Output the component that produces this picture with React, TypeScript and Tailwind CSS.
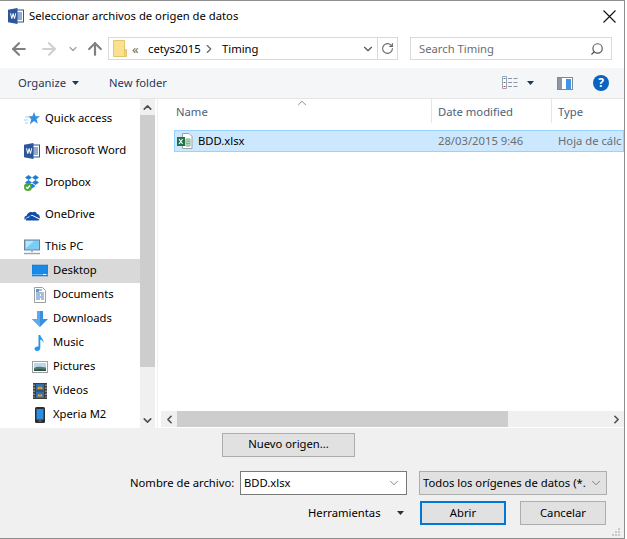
import { ChevronDown, ChevronUp, ChevronLeft, ChevronRight, ArrowLeft, ArrowRight, ArrowUp, RotateCw, Search } from "lucide-react";
import type { ReactNode } from "react";

const WordIcon = ({ size = 16 }: { size?: number }) => (
  <svg width={size} height={size} viewBox="0 0 16 16" className="shrink-0">
    <rect x="6" y="2" width="9.5" height="12" fill="#fff" stroke="#2b579a" />
    <path d="M9 5h5M9 7h5M9 9h5M9 11h5" stroke="#2b579a" />
    <path d="M0 1.8 9.5 0v16L0 14.2z" fill="#2b579a" />
    <path d="M2 5.2h1.1l.7 3.6.9-3.6h.9l.9 3.6.7-3.6h1l-1.2 5.6h-1L5.1 7.4l-.8 3.4h-1z" fill="#fff" />
  </svg>
);

const Folder = () => (
  <svg width="14" height="17" viewBox="0 0 14 17" className="shrink-0">
    <path d="M.5.5h11v16H.5z" fill="#fbe08f" stroke="#e2c66d" />
    <path d="M11.5 9.500h2v7h-2z" fill="#f4d57d" stroke="#e2c66d" />
  </svg>
);

const Star = () => (
  <svg width="16" height="16" viewBox="0 0 16 16" className="shrink-0">
    <path d="M10 1l1.600 4.200H16l-3.500 2.900 1.300 4.600L10 10l-4.200 3.600 1.500-5L4.500 5.200H8.400z" fill="#2f8fe6" />
    <path d="M1 6h4M0 9h4M1 12h3" stroke="#9fcdf2" />
  </svg>
);

const Dropbox = () => (
  <svg width="16" height="16" viewBox="0 0 16 16" className="shrink-0">
    <path d="M4.500 0 8 2.500 4.500 5 1 2.500zM11.500 0 15 2.500 11.500 5 8 2.500zM4.500 5 8 7.500 4.500 10 1 7.500zM11.500 5 15 7.500 11.500 10 8 7.500zM8 8.500l3.500 2.500L8 13.500 4.500 11z" fill="#1f7fd6" />
    <circle cx="4" cy="12" r="4" fill="#4ba63a" />
    <path d="M2 12l1.500 1.500L6 10.500" stroke="#fff" strokeWidth="1.300" fill="none" />
  </svg>
);

const OneDrive = () => (
  <svg width="16" height="16" viewBox="0 0 16 16" className="shrink-0">
    <path d="M1 13c-1.200-1.500-.6-4 1.600-4.200C3.200 6 6 4 8.400 5.300c1.300-1 4-.8 4.600 1.700 2 .2 3.400 2.400 2.700 4.400L9.500 8.400c-1.800-1-3-.2-3.500 1.200C4 9.200 1.800 10.600 1 13z" fill="#0f4fa8" />
    <path d="M2 13.500c-.5-2 1-3.200 3-3 .8-1.800 3-2.400 4.500-1l6 3c-.3.600-.8 1-1.500 1z" fill="#0f4fa8" />
  </svg>
);

const Monitor = ({ small }: { small?: boolean }) =>
  small ? (
    <svg width="16" height="16" viewBox="0 0 16 16" className="shrink-0">
      <rect x="0" y="2" width="16" height="11" fill="#1a8ae6" stroke="#0f6cc0" strokeWidth=".5" />
      <path d="M0 11.500h16" stroke="#55b3f5" />
      <path d="M11 11.500h3" stroke="#fff" />
    </svg>
  ) : (
    <svg width="16" height="16" viewBox="0 0 16 16" className="shrink-0">
      <rect x=".5" y="1" width="15" height="10" fill="#7bcdf7" stroke="#6d8296" />
      <path d="M2 2h8L2 9z" fill="#b5e6fb" />
      <path d="M7 11.500h2v1.500H7z" fill="#a0aab4" />
      <path d="M0 14.500h16" stroke="#9aa5b1" strokeWidth="1.500" />
    </svg>
  );

const Documents = () => (
  <svg width="16" height="16" viewBox="0 0 16 16" className="shrink-0">
    <path d="M2.500.5h8l3 3v12h-11z" fill="#fff" stroke="#9aa0a6" />
    <path d="M7 3h3M4 6h8M4 8h4M9 8h3M4 10h8M4 12h4M9 12h3" stroke="#4a7fb0" />
    <rect x="4" y="2" width="3" height="3" fill="#4d9be0" />
  </svg>
);

const Downloads = () => (
  <svg width="16" height="16" viewBox="0 0 16 16" className="shrink-0">
    <path d="M5 0h6v8h5l-8 8-8-8h5z" fill="#3a8fe0" />
    <path d="M5 0h3v16L0 8h5z" fill="#5ea9ea" />
  </svg>
);

const Music = () => (
  <svg width="16" height="16" viewBox="0 0 16 16" className="shrink-0">
    <path d="M6.500 0h1.800c.3 3 3.700 4 3.200 8-.5-1.800-1.700-3-3.200-3.400V13c0 1.800-1.500 3-3.300 3C3.500 16 2.500 15 2.500 13.800c0-1.500 1.700-2.700 4-2.300z" fill="#1f97ee" />
  </svg>
);

const Pictures = () => (
  <svg width="16" height="16" viewBox="0 0 16 16" className="shrink-0">
    <rect x=".5" y="2.500" width="15" height="11" fill="#fff" stroke="#9aa0a6" />
    <rect x="2" y="4" width="12" height="8" fill="#bcd7ea" />
    <path d="M2 9c3-2 6-1.500 12-.5V12H2z" fill="#4f7a66" />
    <path d="M2 11c4-1 8-1 12 0v1H2z" fill="#2e4e45" />
  </svg>
);

const Videos = () => (
  <svg width="16" height="16" viewBox="0 0 16 16" className="shrink-0">
    <rect x="1" y="0" width="14" height="16" fill="#3d3d3d" />
    <path d="M2 1.500v13M14 1.500v13" stroke="#ddd" strokeDasharray="1.500 1.500" />
    <rect x="4" y="1" width="8" height="6.500" fill="#2f6fb5" />
    <rect x="4" y="8.500" width="8" height="6.500" fill="#2f6fb5" />
    <path d="M5 6l2-3 1 2 1-2 2 3zM5 13.500l2-3 1 2 1-2 2 3z" fill="#e0a020" />
  </svg>
);

const Phone = () => (
  <svg width="16" height="16" viewBox="0 0 16 16" className="shrink-0">
    <rect x="3" y="0" width="10" height="16" rx="1.500" fill="#2c2c2c" />
    <rect x="4.500" y="2" width="7" height="10.500" fill="#2a8fe0" />
    <rect x="6.500" y="13.500" width="3" height="1" fill="#888" />
  </svg>
);

const ExcelIcon = () => (
  <svg width="16" height="16" viewBox="0 0 16 16" className="shrink-0">
    <path d="M5.500.5h6.500l3 3v12H5.500z" fill="#fff" stroke="#9aa0a6" />
    <path d="M9 6h4v7H9zM9 8.300h4M9 10.600h4M11 6v7" fill="none" stroke="#76b08c" />
    <rect x="0" y="4" width="8" height="9" fill="#1f7244" />
    <path d="M2 6l3.600 5M5.600 6L2 11" stroke="#fff" strokeWidth="1.200" />
  </svg>
);

const DetailsIcon = () => (
  <svg width="16" height="14" viewBox="0 0 16 14" className="shrink-0">
    <path d="M.5.500h4v12h-4z" fill="#fff" stroke="#9aa5b1" />
    <path d="M1.500 2.500h2" stroke="#4a7fb0" />
    <path d="M1.500 6.500h2" stroke="#6d7885" />
    <path d="M1.500 10.500h2" stroke="#d04040" />
    <path d="M6 2.500h4M11.500 2.500h4M6 6.500h4M11.500 6.500h4M6 10.500h4M11.500 10.500h4" stroke="#8a96a3" />
  </svg>
);

const PaneIcon = () => (
  <svg width="16" height="13" viewBox="0 0 16 13" className="shrink-0">
    <rect x=".5" y=".5" width="15" height="12" fill="#fff" stroke="#7d8a96" />
    <rect x="1" y="1" width="4" height="11" fill="#8c98a4" />
    <rect x="9" y="2" width="5" height="10" fill="#3e96e4" />
  </svg>
);

const CloseIcon = () => (
  <svg width="13" height="13" viewBox="0 0 13 13" className="shrink-0">
    <path d="M.5.5l12 12M12.500.5l-12 12" stroke="#111" strokeWidth="1.100" />
  </svg>
);

const Caret = ({ color = "#1e395b" }: { color?: string }) => (
  <svg width="7" height="4" viewBox="0 0 7 4" className="shrink-0">
    <path d="M0 0h7L3.500 4z" fill={color} />
  </svg>
);

const NavRow = ({ icon, label, indent, selected, gap }: { icon: ReactNode; label: string; indent?: boolean; selected?: boolean; gap?: boolean }) => (
  <div className={`h-6 flex items-center gap-[5px] text-black ${indent ? "pl-8" : "pl-6"} ${selected ? "bg-[#d9d9d9]" : ""} ${gap ? "mt-2" : ""}`}>
    {icon}
    <span className="pb-[2px]">{label}</span>
  </div>
);

const App = () => {
  return (
    <div className="w-[625px] h-[539px] bg-white border-t border-r border-b border-[#8f8f8f] flex flex-col overflow-hidden text-[11.25px] leading-4 text-black font-['Noto_Sans','Open_Sans',sans-serif]">
      {/* title bar */}
      <div className="h-8 shrink-0 flex items-center pl-2 pr-[8px] pb-[2px]">
        <WordIcon />
        <span className="ml-[5px] flex-1 truncate">Seleccionar archivos de origen de datos</span>
        <CloseIcon />
      </div>

      {/* address row */}
      <div className="h-[35px] shrink-0 flex items-center pl-[9px] pb-[4px]">
        <ArrowLeft size={20} strokeWidth={2.6} className="text-[#808080]" />
        <ArrowRight size={20} strokeWidth={2.6} className="ml-[10px] text-[#d0d0d0]" />
        <ChevronDown size={12} strokeWidth={2.5} className="ml-[8px] text-[#a0a0a0]" />
        <ArrowUp size={20} strokeWidth={2.6} className="ml-[6px] text-[#808080]" />
        <div className="ml-[3px] w-[290px] h-[23px] border border-[#d9d9d9] flex items-center pl-1">
          <Folder />
          <span className="ml-[5px] w-4 text-[13px] text-[#666]">«</span>
          <span className="w-[54px]">cetys2015</span>
          <ChevronRight size={14} strokeWidth={2} className="text-[#666]" />
          <span className="ml-[6px]">Timing</span>
          <ChevronDown size={14} strokeWidth={2} className="ml-auto mr-[2px] text-[#555]" />
          <div className="w-5 h-full border-l border-[#d9d9d9] flex items-center justify-center">
            <RotateCw size={13} strokeWidth={2} className="text-[#666]" />
          </div>
        </div>
        <div className="ml-3 w-[202px] h-[23px] border border-[#d9d9d9] flex items-center pl-2 pr-[7px] text-[#6d6d6d]">
          <span className="flex-1">Search Timing</span>
          <Search size={14} strokeWidth={2} className="text-[#555] -scale-x-100" />
        </div>
      </div>

      {/* toolbar */}
      <div className="h-[31px] shrink-0 bg-[#f5f6f7] border-b border-[#e5e5e5] flex items-center pl-[18px] pr-[15px] text-[#1e395b]">
        <span className="w-[54px]">Organize</span>
        <Caret />
        <span className="ml-[30px]">New folder</span>
        <span className="ml-auto"><DetailsIcon /></span>
        <span className="ml-[9px]"><Caret /></span>
        <span className="ml-[23px]"><PaneIcon /></span>
        <div className="ml-[20px] w-4 h-4 rounded-full bg-[#0b63c0] text-white text-[12px] font-bold flex items-center justify-center">?</div>
      </div>

      {/* main */}
      <div className="flex-1 min-h-0 flex">
        <div className="w-[140px] shrink-0 pt-2">
          <NavRow icon={<Star />} label="Quick access" />
          <NavRow icon={<WordIcon />} label="Microsoft Word" gap />
          <NavRow icon={<Dropbox />} label="Dropbox" gap />
          <NavRow icon={<OneDrive />} label="OneDrive" gap />
          <NavRow icon={<Monitor />} label="This PC" gap />
          <NavRow icon={<Monitor small />} label="Desktop" indent selected />
          <NavRow icon={<Documents />} label="Documents" indent />
          <NavRow icon={<Downloads />} label="Downloads" indent />
          <NavRow icon={<Music />} label="Music" indent />
          <NavRow icon={<Pictures />} label="Pictures" indent />
          <NavRow icon={<Videos />} label="Videos" indent />
          <NavRow icon={<Phone />} label="Xperia M2" indent />
        </div>
        <div className="w-[15px] shrink-0 bg-[#f0f0f0] flex flex-col">
          <div className="h-4 flex items-center justify-center"><ChevronUp size={13} strokeWidth={3} className="text-[#505050]" /></div>
          <div className="h-[252px] bg-[#cdcdcd]" />
          <div className="mt-auto h-4 flex items-center justify-center"><ChevronDown size={13} strokeWidth={3} className="text-[#505050]" /></div>
        </div>
        <div className="flex-1 min-w-0 ml-[2px] border-l border-[#f0f0f0] flex flex-col">
          <div className="flex-1 min-h-0 relative pl-4">
            <div className="h-6 flex text-[#4c607a]">
              <div className="w-[258px] pl-[2px] pt-[5px] border-r border-[#e5e5e5]">Name</div>
              <div className="w-[120px] pl-[6px] pt-[5px] border-r border-[#e5e5e5]">Date modified</div>
              <div className="pl-[6px] pt-[5px]">Type</div>
            </div>
            <ChevronUp size={14} strokeWidth={1.5} className="absolute left-[137px] -top-[3px] text-[#7a7a7a]" />
            <div className="mt-[7px] h-[22px] bg-[#cce8ff] border border-[#99d1ff] flex items-center whitespace-nowrap overflow-hidden">
              <div className="w-[263px] shrink-0 flex items-center gap-[5px] pl-[2px]">
                <ExcelIcon />
                <span>BDD.xlsx</span>
              </div>
              <span className="w-[120px] shrink-0 text-[#6d6d6d]">28/03/2015 9:46</span>
              <span className="text-[#6d6d6d]">Hoja de cálc</span>
            </div>
          </div>
          <div className="h-[16px] shrink-0 ml-[3px] mb-px bg-[#f0f0f0] flex items-center">
            <div className="w-4 flex justify-center"><ChevronLeft size={13} strokeWidth={3} className="text-[#505050]" /></div>
            <div className="w-[331px] h-full bg-[#cdcdcd]" />
            <div className="ml-auto w-4 flex justify-center"><ChevronRight size={13} strokeWidth={3} className="text-[#505050]" /></div>
          </div>
        </div>
      </div>

      {/* footer */}
      <div className="h-[110px] shrink-0 bg-[#f0f0f0] flex flex-col relative">
        <div className="pl-[222px] pt-[5px]">
          <button className="w-[133px] h-6 pb-[2px] bg-[#e1e1e1] border border-[#adadad]">Nuevo origen...</button>
        </div>
        <div className="flex items-center mt-[14px]">
          <span className="ml-[130px] w-[110px] whitespace-nowrap">Nombre de archivo:</span>
          <div className="w-[167px] h-6 bg-white border border-[#7a7a7a] flex items-center pl-[3px] pr-[5px]">
            <span className="flex-1">BDD.xlsx</span>
            <ChevronDown size={14} strokeWidth={1.2} className="text-[#555]" />
          </div>
          <div className="ml-3 w-[188px] h-6 bg-[#e1e1e1] border border-[#adadad] flex items-center pl-[3px] pr-[3px]">
            <span className="flex-1 overflow-hidden whitespace-nowrap">Todos los orígenes de datos (*.c</span>
            <ChevronDown size={14} strokeWidth={1.2} className="ml-[3px] shrink-0 text-[#555]" />
          </div>
        </div>
        <div className="flex items-center mt-[6px]">
          <span className="ml-[308px] w-[89px]">Herramientas</span>
          <Caret color="#303030" />
          <button className="ml-4 w-[86px] h-6 bg-[#e1e1e1] border-2 border-[#0078d7]">Abrir</button>
          <button className="ml-[14px] w-[86px] h-6 bg-[#e1e1e1] border border-[#adadad]">Cancelar</button>
        </div>
        <svg width="10" height="10" viewBox="0 0 10 10" className="absolute right-[3px] bottom-[1px]">
          <path d="M7 1h2v2H7zM4 4h2v2H4zM7 4h2v2H7zM1 7h2v2H1zM4 7h2v2H4zM7 7h2v2H7z" fill="#c8c8c8" />
        </svg>
      </div>
    </div>
  );
};

export default App;
